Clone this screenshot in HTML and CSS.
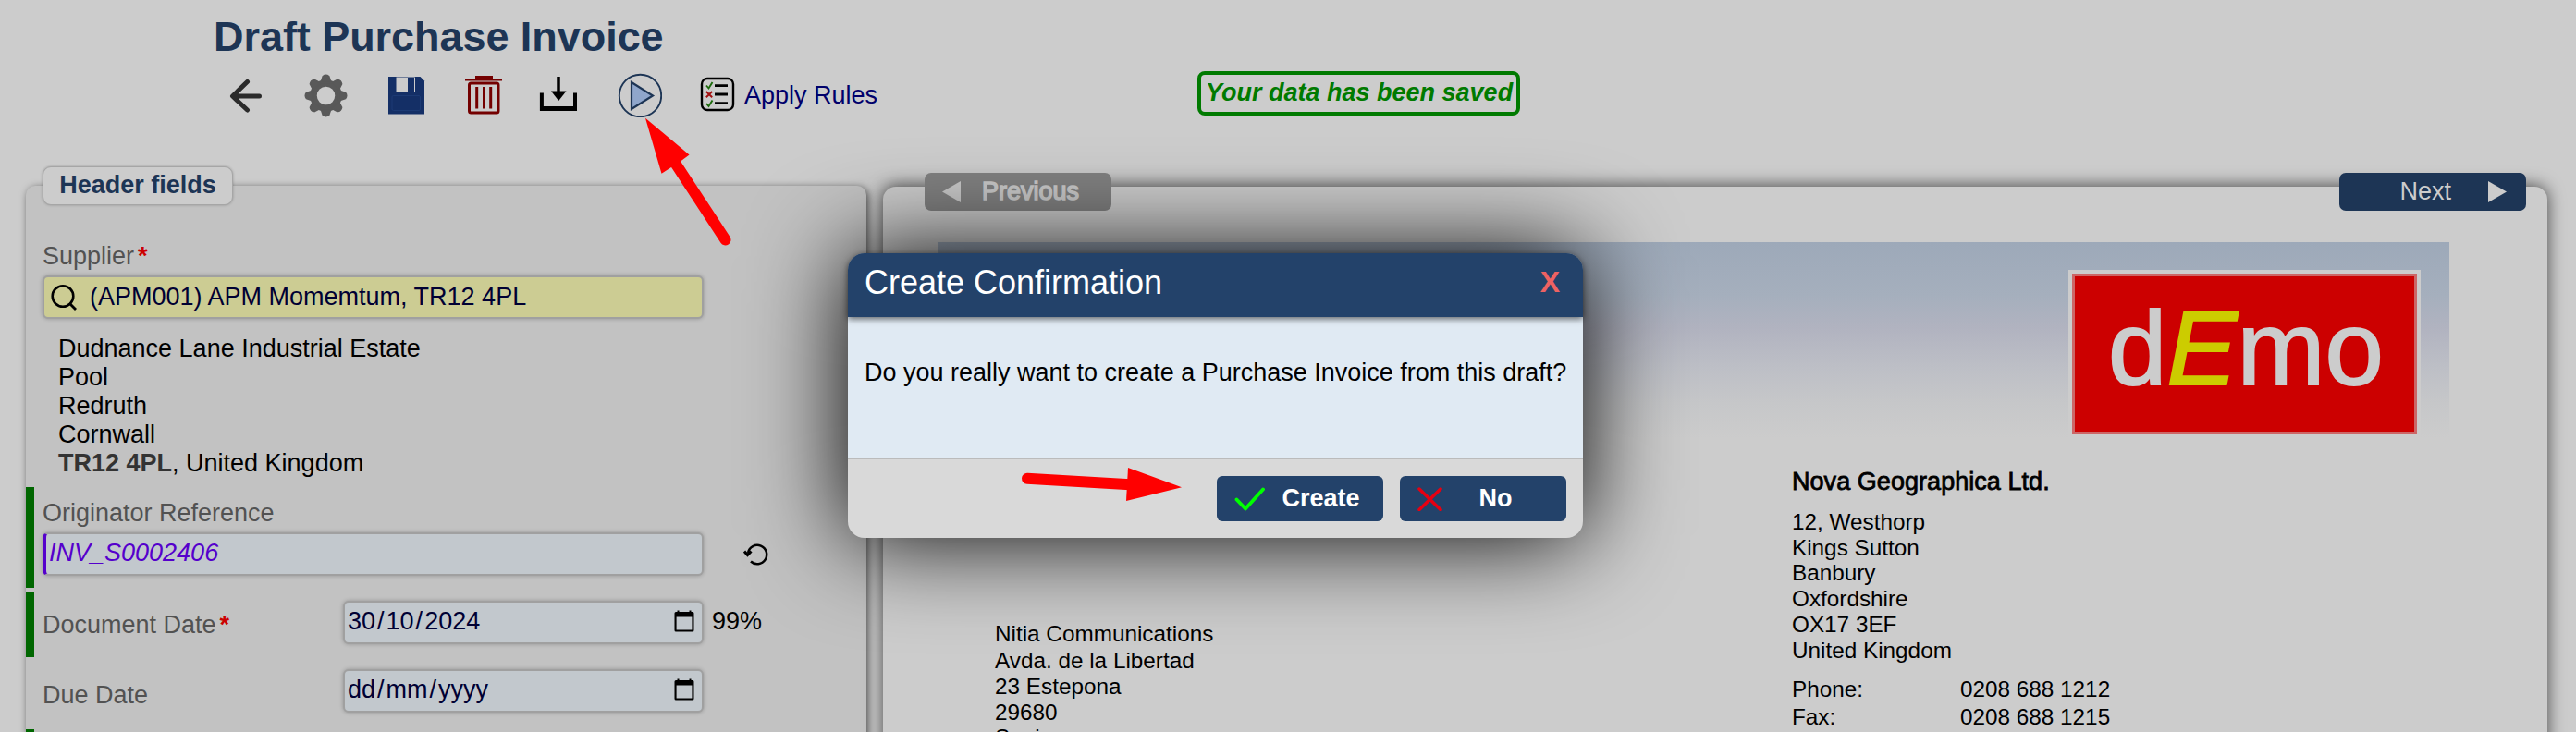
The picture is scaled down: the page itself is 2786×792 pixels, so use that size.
FILE: index.html
```html
<!DOCTYPE html>
<html lang="en">
<head>
<meta charset="utf-8">
<title>Draft Purchase Invoice</title>
<link rel="stylesheet" href="styles.css">
</head>
<body>
<header class="topbar">
  <h1 class="title">Draft Purchase Invoice</h1>
  <div class="toolbar">
    <svg class="icon" viewBox="0 0 48 48"><path d="M38.500 25H10M25.500 9.500L9.500 25L25.500 40" fill="none" stroke="#2b2b2b" stroke-width="5" stroke-linecap="round" stroke-linejoin="round"/></svg>
    <svg class="icon" viewBox="0 0 48 48"><g transform="translate(24.500 24.500)" stroke="#595959" fill="none"><circle r="13.500" stroke-width="7.500"/><path id="tooth" d="M-5.500 -14L-3.200 -21Q0 -23.500 3.200 -21L5.500 -14Z" fill="#595959" stroke-width="1.500"/><use href="#tooth" transform="rotate(45)"/><use href="#tooth" transform="rotate(90)"/><use href="#tooth" transform="rotate(135)"/><use href="#tooth" transform="rotate(180)"/><use href="#tooth" transform="rotate(225)"/><use href="#tooth" transform="rotate(270)"/><use href="#tooth" transform="rotate(315)"/></g></svg>
    <svg class="icon" viewBox="0 0 48 48"><path d="M5 4H39.500L44 8.500V44.500H5Z" fill="#142f66"/><path d="M13.500 4.500H34V20.500H13.500Z" fill="#ccc"/><path d="M26 5H33V20H26Z" fill="#142f66"/><rect x="9" y="24.500" width="30.500" height="16" rx="1.500" fill="none" stroke="#1c3a74"/></svg>
    <svg class="icon" viewBox="0 0 48 48"><g fill="none" stroke="#740000"><path d="M4 7.200H44" stroke-width="2.500"/><path d="M15 5H34" stroke-width="4"/><rect x="8.500" y="11" width="31.500" height="32" rx="2" stroke-width="3"/><path d="M16.700 15V38.500M24.500 15V38.500M31.700 15V38.500" stroke-width="3"/></g></svg>
    <svg class="icon" viewBox="0 0 48 48"><path d="M24 4V22" stroke="#000" stroke-width="3.500"/><path d="M16 19.500H32.500L24.200 30Z"/><path d="M5.900 21.500V38.800H42V21.500" fill="none" stroke="#000" stroke-width="4"/><path d="M4 36H44V41H4Z"/></svg>
    <svg class="icon" viewBox="0 0 48 48"><circle cx="24.500" cy="24.500" r="22.700" fill="none" stroke="#1d3555" stroke-width="1.900"/><path d="M15 10V39L38 24.500Z" fill="#8fa6cb" stroke="#1d3555" stroke-width="2.200"/></svg>
    <svg class="icon" viewBox="0 0 48 48"><rect x="7" y="6" width="34" height="34" rx="6" fill="none" stroke="#000" stroke-width="2.400"/><path d="M21 13.700H35M21 23H35M21 32.700H35" stroke="#000" stroke-width="2.800"/><path d="M12 13.500L14.500 16.500L18.500 10M12 33L14.500 36L18.500 29.500" fill="none" stroke="#1c6b0c" stroke-width="1.900"/><path d="M11.800 20L18.200 26.200M18.200 20L11.800 26.200" stroke="#a31212" stroke-width="2"/></svg>
    <a class="rules">Apply Rules</a>
    <div class="status">Your data has been saved</div>
  </div>
</header>

<main class="main">
  <section class="fields">
    <div class="legend">Header fields</div>
    <div class="group supplier">
      <div class="label">Supplier<b class="req">*</b></div>
      <div class="field lookup">
        <svg class="search" viewBox="0 0 30 30"><circle cx="14" cy="13.500" r="11.300" fill="none" stroke="#000" stroke-width="2.600"/><path d="M21 21L28 28" stroke="#000" stroke-width="2.800"/></svg>
        <span>(APM001) APM Momemtum, TR12 4PL</span>
      </div>
      <address class="address">Dudnance Lane Industrial Estate<br>Pool<br>Redruth<br>Cornwall<br><b>TR12 4PL</b>, United Kingdom</address>
    </div>
    <div class="group marked reference">
      <div class="label">Originator Reference</div>
      <div class="line">
        <div class="field changed">INV_S0002406</div>
        <svg class="undo" viewBox="0 0 27 25"><path d="M5 11A10.200 10.200 0 1 1 8 20.500" fill="none" stroke="#000" stroke-width="2.500"/><path d="M1 9.500L4.500 13.500L8.500 9.500" fill="none" stroke="#000" stroke-width="3"/></svg>
      </div>
    </div>
    <div class="group marked date">
      <div class="label">Document Date<b class="req">*</b></div>
      <div class="field datebox">
        <span class="parts"><i>30</i>/<i>10</i>/<i>2024</i></span>
        <svg class="calendar" viewBox="0 0 22 24"><path d="M2 2H20Q21.500 2 21.500 3.500V22Q21.500 23.500 20 23.500H2Q.5 23.500 .5 22V3.500Q.5 2 2 2ZM2.600 7.500V21.400H19.400V7.500Z" fill-rule="evenodd"/><path d="M4.500 .5V3M17.500 .5V3" stroke="#000" stroke-width="2"/></svg>
      </div>
      <span class="score">99%</span>
    </div>
    <div class="group date due">
      <div class="label">Due Date</div>
      <div class="field datebox">
        <span class="parts"><i>dd</i>/<i>mm</i>/<i>yyyy</i></span>
        <svg class="calendar" viewBox="0 0 22 24"><path d="M2 2H20Q21.500 2 21.500 3.500V22Q21.500 23.500 20 23.500H2Q.5 23.500 .5 22V3.500Q.5 2 2 2ZM2.600 7.500V21.400H19.400V7.500Z" fill-rule="evenodd"/><path d="M4.500 .5V3M17.500 .5V3" stroke="#000" stroke-width="2"/></svg>
      </div>
    </div>
    <div class="group marked next-row"></div>
  </section>

  <section class="preview">
    <nav class="pager">
      <div class="page-btn prev"><svg class="tri" viewBox="0 0 20 23"><path d="M0 11.500L20 0V23Z" fill="#c8c8c8"/></svg>Previous</div>
      <div class="page-btn next">Next<svg class="tri" viewBox="0 0 20 23"><path d="M20 11.500L0 0V23Z" fill="#ccc"/></svg></div>
    </nav>
    <div class="sheet">
      <div class="banner"><div class="logo"><span>d<em>E</em>mo</span></div></div>
      <div class="parties">
        <div class="buyer"><p class="first">Nitia Communications</p><p>Avda. de la Libertad<br>23 Estepona<br>29680<br>Spain</p></div>
        <div class="seller">
          <p class="name">Nova Geographica Ltd.</p>
          <p class="street">12, Westhorp<br>Kings Sutton<br>Banbury<br>Oxfordshire<br>OX17 3EF<br>United Kingdom</p>
          <div class="contact"><span>Phone:</span><span>0208 688 1212</span><span>Fax:</span><span>0208 688 1215</span></div>
        </div>
      </div>
    </div>
  </section>
</main>

<div class="dialog">
  <div class="dialog-head"><span>Create Confirmation</span><b class="close">X</b></div>
  <div class="dialog-body">Do you really want to create a Purchase Invoice from this draft?</div>
  <div class="dialog-foot">
    <div class="btn"><svg class="mark" viewBox="0 0 34 26"><path d="M2.500 13.500L12 23.500L31 2.500" fill="none" stroke="#0f0" stroke-width="3.800" stroke-linecap="round" stroke-linejoin="round"/></svg><span>Create</span></div>
    <div class="btn no"><svg class="mark" viewBox="0 0 34 26"><path d="M2 2L25 24.500M25 2L2 24.500" fill="none" stroke="#e60012" stroke-width="3.500" stroke-linecap="round"/></svg><span>No</span></div>
  </div>
</div>

<svg class="pointers" viewBox="0 0 2786 792"><g fill="red" stroke="red"><path d="M698 127.700L745.500 167.500L736 174.500L726 181L715.500 187.700Z" stroke="none"/><path d="M728 173L784.500 259.500" stroke-width="12" stroke-linecap="round"/><path d="M1278 527.300L1220 506L1218 542Z" stroke="none"/><path d="M1111 517.700L1222 524.200" stroke-width="12" stroke-linecap="round"/></g></svg>
</body>
</html>
```
FILE: styles.css
```css
* { box-sizing: border-box; }
body {
  margin: 0;
  width: 2786px;
  height: 792px;
  overflow: hidden;
  position: relative;
  background: #ccc;
  color: #000;
  font: 27px/31px "Liberation Sans", Arial, sans-serif;
}
p { margin: 0; }
svg { display: block; }

/* Title and toolbar */
.topbar { height: 201px; padding-top: 15px; }
.title {
  margin: 0 0 14px 231px;
  font-size: 45px;
  line-height: 50px;
  letter-spacing: -.05px;
  color: #1d3555;
}
.toolbar {
  display: grid;
  grid-template-columns: 86px 87px 84px 81px 88px 84px 53px 490px auto;
  justify-content: start;
  align-items: center;
  height: 48px;
  margin-left: 242px;
}
.icon { width: 48px; height: 48px; }
.rules { color: #00006b; }
.status {
  width: 349px;
  height: 48px;
  margin-top: -4px;
  border: 4px solid #007a00;
  border-radius: 8px;
  padding: 4px 0 0 5px;
  color: #007a00;
  font-weight: bold;
  font-style: italic;
  white-space: nowrap;
}

/* Two panels */
.main {
  display: flex;
  gap: 18px;
  height: 620px;
  padding-left: 28px;
}
.fields {
  display: flex;
  flex-direction: column;
  width: 909px;
  background: #c2c2c2;
  border-radius: 10px;
  box-shadow: 2px 2px 8px rgba(0, 0, 0, .6);
}
.legend {
  flex: none;
  width: 206px;
  height: 42px;
  margin: -21px 0 0 18px;
  border: 1px solid #a6a6a6;
  border-radius: 9px;
  background: #ccc;
  box-shadow: 0 0 3px rgba(0, 0, 0, .25);
  color: #1d3555;
  font-weight: bold;
  line-height: 39px;
  text-align: center;
}
.group { padding-left: 18px; flex: none; }
.marked { border-left: 9px solid #006600; padding-left: 9px; }
.label { color: #525252; }
.req { margin-left: 4px; color: #c00; }
.field {
  height: 47px;
  border: 2px solid #a0a0a0;
  border-radius: 6px;
  background: #c2c8cd;
  box-shadow: 0 0 4px rgba(0, 0, 0, .25);
  color: #000033;
  line-height: 41px;
}
.supplier { height: 305px; padding-top: 40px; }
.lookup {
  display: flex;
  width: 715px;
  margin: 5px 0 17px;
  padding-left: 6px;
  background: #cccc93;
  line-height: 42px;
}
.search { width: 30px; height: 30px; margin: 7px 13px 0 0; }
.address { padding-left: 17px; font-style: normal; }
.address b { color: #333; }
.reference { height: 109px; padding-top: 13px; }
.line { display: flex; align-items: center; margin-top: 5px; }
.changed {
  width: 715px;
  padding-left: 3px;
  border-left: 4px solid #5500cc;
  color: #5500cc;
  font-style: italic;
}
.undo { width: 27px; height: 25px; margin-left: 43px; }
.date { display: flex; height: 70px; margin-top: 5px; padding-top: 9px; }
.date .label { width: 325px; padding-top: 11px; }
.datebox {
  display: flex;
  justify-content: space-between;
  width: 390px;
  padding: 0 8px 0 1px;
}
.parts i { font-style: normal; padding: 0 2px; }
.calendar { width: 22px; height: 24px; margin-top: 8px; }
.score { margin-left: 9px; padding-top: 7px; }
.due { margin-top: 0; height: 78px; padding-top: 13px; }
.due .label { padding-top: 13px; }
.next-row { height: 30px; }

/* Document preview */
.preview {
  width: 1800px;
  margin-top: 1px;
  border-radius: 14px;
  background: #ccc;
  box-shadow: 0 -1px 18px rgba(0, 0, 0, .65);
}
.pager {
  display: flex;
  justify-content: space-between;
  margin: -15px 23px 0 45px;
}
.page-btn {
  display: flex;
  align-items: center;
  width: 202px;
  height: 41px;
  border-radius: 7px;
  line-height: 37px;
}
.tri { width: 20px; height: 23px; }
.prev {
  gap: 23px;
  padding-left: 19px;
  background: #808080;
  color: #c8c8c8;
  -webkit-text-stroke: 1.5px #c8c8c8;
}
.next {
  justify-content: flex-end;
  gap: 40px;
  padding-right: 21px;
  background: #1d3555;
  color: #ccc;
}
.sheet { margin: 34px 0 0 60px; width: 1634px; }
.banner {
  height: 212px;
  padding: 30px 31px 0 0;
  background: linear-gradient(#9da9b9, #a5afbd 27%, #b1b3c0 44%, #bdbfc6 64%, #c6c7c9 82%, #ccc);
}
.logo {
  width: 381px;
  height: 182px;
  margin-left: auto;
  padding: 4px;
  background: #ccc;
}
.logo span {
  display: block;
  height: 174px;
  padding-left: 36px;
  border: 3px solid #cc6666;
  background: #c00;
  color: #ccc;
  font-size: 114px;
  line-height: 156px;
  -webkit-text-stroke: 2px #ccc;
}
.logo em { color: #cccc00; -webkit-text-stroke: 2px #cccc00; }
.parties {
  display: flex;
  font-size: 24.3px;
  line-height: 27.7px;
}
.buyer { width: 923px; padding: 197.500px 0 0 61px; }
.buyer .first { margin-bottom: 2px; }
.seller { padding-top: 30px; }
.name {
  font-size: 27px;
  line-height: 34px;
  letter-spacing: .05px;
  -webkit-text-stroke: .8px #000;
}
.street { margin-top: 13px; }
.contact {
  display: grid;
  grid-template-columns: 182px auto;
  margin-top: 13.500px;
  line-height: 30.5px;
}

/* Confirmation dialog */
.dialog {
  position: absolute;
  left: 917px;
  top: 274px;
  width: 795px;
  height: 308px;
  display: flex;
  flex-direction: column;
  border-radius: 18px;
  background: #d9d9d9;
  box-shadow: 0 0 105px #000;
}
.dialog-head {
  position: relative;
  display: flex;
  justify-content: space-between;
  height: 69px;
  padding: 0 25px 0 18px;
  border-radius: 18px 18px 0 0;
  background: #23426a;
  box-shadow: 0 2px 7px rgba(0, 0, 0, .6);
  color: #fff;
  font-size: 36px;
  line-height: 63px;
}
.close { color: #ee6262; font-size: 32px; }
.dialog-body {
  height: 154px;
  padding: 45px 0 0 18px;
  border-bottom: 2px solid #bbb;
  background: #e0eaf3;
  white-space: nowrap;
}
.dialog-foot {
  display: flex;
  justify-content: flex-end;
  gap: 18px;
  padding: 18px 18px 0 0;
}
.btn {
  display: flex;
  align-items: center;
  width: 180px;
  height: 49px;
  padding-left: 19px;
  border-radius: 6px;
  background: #23426a;
  color: #fff;
  font-weight: bold;
}
.btn span { width: 119px; padding-bottom: 1px; text-align: center; }
.no span { width: 101px; }
.mark { width: 34px; height: 26px; }
.pointers { position: absolute; left: 0; top: 0; width: 2786px; height: 792px; }
```
